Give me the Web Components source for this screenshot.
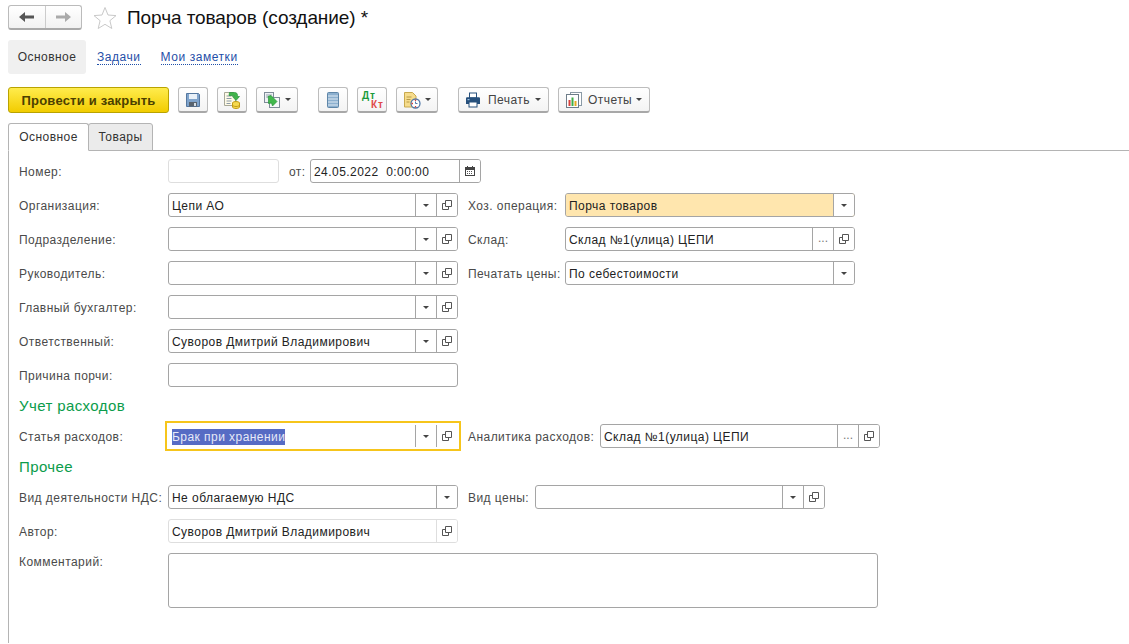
<!DOCTYPE html>
<html lang="ru">
<head>
<meta charset="utf-8">
<title>Порча товаров</title>
<style>
  html, body { margin: 0; background: #fff; }
  body { font: 12px "Liberation Sans", Arial, sans-serif; color: #333; }
  svg { display: block; }
</style>
</head>
<body>
<doc-page>
  <doc-header slot="header" title-text="Порча товаров (создание) *"></doc-header>
  <section-nav slot="nav"></section-nav>
  <tool-bar slot="tools">
    <tool-button primary>Провести и закрыть</tool-button>
    <tool-button>
      <svg slot="icon" width="14" height="14" viewBox="0 0 14 14"><path d="M.5.5h12l1 1v12H.5z" fill="#7fa3cb" stroke="#54779f"/><rect x="3" y="1" width="8" height="5" fill="#e8f0f8"/><rect x="3" y="9" width="8" height="4.500" fill="#59636e"/><rect x="8" y="10" width="2" height="3" fill="#d5dde5"/></svg>
    </tool-button>
    <tool-button>
      <svg slot="icon" width="18" height="18" viewBox="0 0 18 18"><path d="M1.500 1.500h9l2 2v11h-11z" fill="#fffbe8" stroke="#a8a898"/><path d="M3.500 5h5M3.500 7.500h5M3.500 10h5M3.500 12.500h4" stroke="#8c9aa8"/><ellipse cx="13" cy="12" rx="3.500" ry="1.500" fill="#f5d94e" stroke="#c29b16"/><path d="M9.500 12v4c0 .8 1.600 1.500 3.500 1.500s3.500-.7 3.500-1.500v-4" fill="#f5d94e" stroke="#c29b16"/><path d="M9.500 14c0 .8 1.600 1.500 3.500 1.500s3.500-.7 3.500-1.500" fill="none" stroke="#c29b16"/><path d="M6.500 1.500h5c2 0 3 1 3 3v1h2l-3.500 4-3.500-4h2v-1h-5.500z" fill="#3fb54a" stroke="#26903a" stroke-width=".7"/></svg>
    </tool-button>
    <tool-button menu>
      <svg slot="icon" width="18" height="18" viewBox="0 0 18 18"><rect x="1.500" y="1.500" width="9" height="10" fill="#eef1f4" stroke="#7f8c99"/><rect x="6.500" y="6.500" width="10" height="10" fill="#f7f8fa" stroke="#7f8c99"/><path d="M3 4h6M3 6h4" stroke="#9aa7b3"/><path d="M5 5.500l3-1 6 6-4.500 4.500-1-3-3 .5v-4.500z" fill="#41b84c" stroke="#26903a" stroke-width=".7"/></svg>
    </tool-button>
    <span class="sep" style="width:2px"></span>
    <tool-button>
      <svg slot="icon" width="12" height="16" viewBox="0 0 12 16"><rect x=".5" y=".5" width="11" height="15" rx="1" fill="#8db0cf" stroke="#5f86a8"/><path d="M1 4h10M1 7h10M1 10h10M1 13h10" stroke="#dfeaf4" stroke-width="1.200"/></svg>
    </tool-button>
    <tool-button dtkt></tool-button>
    <tool-button menu>
      <svg slot="icon" width="18" height="18" viewBox="0 0 18 18"><path d="M1.500 1.500h8l3.500 3.500v11h-11.500z" fill="#f6dc8c" stroke="#c8a94e"/><path d="M3.500 6h5M3.500 8.500h4M3.500 11h3" stroke="#b89a45"/><circle cx="12.500" cy="12.500" r="4.500" fill="#fff" stroke="#5279a8" stroke-width="1.300"/><path d="M12.500 8.500v1.500M8.500 12.500h1.500M12.500 16.500v-1.500" stroke="#d8403a" stroke-width="1.300"/><path d="M12.500 10.500v2h2" stroke="#5279a8" fill="none"/></svg>
    </tool-button>
    <span class="sep" style="width:2px"></span>
    <tool-button menu label style="--txt-gap:7px">
      <svg slot="icon" width="16" height="16" viewBox="0 0 16 16"><rect x="4.500" y="1" width="7" height="5" fill="#fff" stroke="#26507c"/><path d="M1 6.500c0-.8.500-1.300 1.300-1.300h11.400c.8 0 1.300.5 1.300 1.300v5.500h-14z" fill="#26507c"/><rect x="4" y="10" width="8" height="5" fill="#fff" stroke="#26507c"/><rect x="2.500" y="7" width="2" height="1.200" fill="#9cc0e2"/></svg>
      Печать
    </tool-button>
    <tool-button menu label style="--txt-gap:5px;width:92px">
      <svg slot="icon" width="18" height="18" viewBox="0 0 18 18"><rect x="5.500" y="1.500" width="11" height="13" fill="#fff" stroke="#8b9aa6"/><rect x="1.500" y="3.500" width="12" height="13" fill="#fff" stroke="#6e7d89"/><rect x="3.500" y="9" width="2" height="6" fill="#d8403a"/><rect x="6.500" y="6.500" width="2" height="8.500" fill="#3fae48"/><rect x="9.500" y="10" width="2" height="5" fill="#e6a91f"/></svg>
      Отчеты
    </tool-button>
  </tool-bar>
  <tab-strip slot="tabs"></tab-strip>
  <form-panel slot="panel">
    <form-row>
      <field-label width="149">Номер:</field-label>
      <form-field width="111" quiet></form-field>
      <field-label pad="10" width="21">от:</field-label>
      <form-field width="171" buttons="calendar" value="24.05.2022  0:00:00"></form-field>
    </form-row>
    <form-row>
      <field-label width="149">Организация:</field-label>
      <form-field width="290" buttons="drop open" value="Цепи АО"></form-field>
      <field-label pad="10" width="97">Хоз. операция:</field-label>
      <form-field width="290" buttons="drop" value="Порча товаров" tint></form-field>
    </form-row>
    <form-row>
      <field-label width="149">Подразделение:</field-label>
      <form-field width="290" buttons="drop open"></form-field>
      <field-label pad="10" width="97">Склад:</field-label>
      <form-field width="290" buttons="more open" value="Склад №1(улица) ЦЕПИ"></form-field>
    </form-row>
    <form-row>
      <field-label width="149">Руководитель:</field-label>
      <form-field width="290" buttons="drop open"></form-field>
      <field-label pad="10" width="97">Печатать цены:</field-label>
      <form-field width="290" buttons="drop" value="По себестоимости"></form-field>
    </form-row>
    <form-row>
      <field-label width="149">Главный бухгалтер:</field-label>
      <form-field width="290" buttons="drop open"></form-field>
    </form-row>
    <form-row>
      <field-label width="149">Ответственный:</field-label>
      <form-field width="290" buttons="drop open" value="Суворов Дмитрий Владимирович"></form-field>
    </form-row>
    <form-row>
      <field-label width="149">Причина порчи:</field-label>
      <form-field width="290"></form-field>
    </form-row>
    <section-title>Учет расходов</section-title>
    <form-row>
      <field-label width="149">Статья расходов:</field-label>
      <form-field width="290" buttons="drop open" value="Брак при хранении" focused></form-field>
      <field-label pad="10" width="132">Аналитика расходов:</field-label>
      <form-field width="280" buttons="more open" value="Склад №1(улица) ЦЕПИ"></form-field>
    </form-row>
    <section-title>Прочее</section-title>
    <form-row>
      <field-label width="149">Вид деятельности НДС:</field-label>
      <form-field width="290" buttons="drop" value="Не облагаемую НДС"></form-field>
      <field-label pad="10" width="67">Вид цены:</field-label>
      <form-field width="290" buttons="drop open"></form-field>
    </form-row>
    <form-row>
      <field-label width="149">Автор:</field-label>
      <form-field width="290" buttons="open" value="Суворов Дмитрий Владимирович" quiet></form-field>
    </form-row>
    <form-row>
      <field-label width="149" top>Комментарий:</field-label>
      <form-field width="710" height="55"></form-field>
    </form-row>
  </form-panel>
</doc-page>

<script>
function shadow(el, html) {
  el.attachShadow({ mode: "open" });
  el.shadowRoot.innerHTML = html;
}

class DocPage extends HTMLElement {
  constructor() {
    super();
    shadow(this, `
      <style>
        :host { display: flex; flex-direction: column; height: 644px; overflow: hidden; background: #fff; }
        .nav { padding: 6px 8px 0; }
        .tools { padding: 13px 8px 0; }
        .tabs { padding: 10px 0 0 8px; }
        .panel { flex: 1; margin-left: 8px; }
      </style>
      <slot name="header"></slot>
      <div class="nav"><slot name="nav"></slot></div>
      <div class="tools"><slot name="tools"></slot></div>
      <div class="tabs"><slot name="tabs"></slot></div>
      <div class="panel"><slot name="panel"></slot></div>
    `);
  }
}

class DocHeader extends HTMLElement {
  constructor() {
    super();
    shadow(this, `
      <style>
        :host { display: flex; align-items: center; height: 34px; padding: 0 8px; box-sizing: border-box; }
        .hist { display: flex; width: 74px; height: 25px; box-sizing: border-box; border: 1px solid #bbb; border-bottom: 2px solid #a9a9a9; border-radius: 3px; background: linear-gradient(#fff, #f2f2f2); }
        .hist div { flex: 1; display: flex; align-items: center; justify-content: center; }
        .hist div + div { border-left: 1px solid #ccc; }
        .star { margin-left: 11px; }
        h1 { margin: 1px 0 0 10px; font: 400 19px "Liberation Sans", Arial, sans-serif; letter-spacing: -.08px; color: #111; }
      </style>
      <div class="hist">
        <div><svg width="15" height="10" viewBox="0 0 15 10"><path d="M0 5l6-5v3.500h9v3H6V10z" fill="#555"/></svg></div>
        <div><svg width="15" height="10" viewBox="0 0 15 10"><path d="M15 5L9 0v3.500H0v3h9V10z" fill="#aaa"/></svg></div>
      </div>
      <svg class="star" width="24" height="23" viewBox="0 0 24 23"><path d="M12 1.500l3 7.500 8 .6-6.100 5.100 1.900 7.800L12 18.300l-6.800 4.200 1.900-7.800L1 9.600 9 9z" fill="#fff" stroke="#c9c9c9"/></svg>
      <h1></h1>
    `);
    this.shadowRoot.querySelector("h1").textContent = this.getAttribute("title-text");
  }
}

class SectionNav extends HTMLElement {
  constructor() {
    super();
    shadow(this, `
      <style>
        :host { display: flex; align-items: center; height: 34px; color: #333; letter-spacing: .45px; }
        .on { display: flex; align-items: center; height: 100%; width: 78px; justify-content: center; background: #f0f0f0; border-radius: 3px; }
        a { color: #1f4fa8; text-decoration: none; border-bottom: 1px dotted #1f4fa8; line-height: 14px; letter-spacing: .55px; }
        .a1 { margin-left: 11px; }
        .a2 { margin-left: 20px; }
      </style>
      <div class="on">Основное</div>
      <a class="a1">Задачи</a>
      <a class="a2">Мои заметки</a>
    `);
  }
}

class ToolBar extends HTMLElement {
  constructor() {
    super();
    shadow(this, `
      <style>
        :host { display: flex; gap: 9px; height: 26px; }
        ::slotted(.sep) { display: block; }
      </style>
      <slot></slot>
    `);
  }
}

class ToolButton extends HTMLElement {
  constructor() {
    super();
    const dtkt = this.hasAttribute("dtkt");
    shadow(this, `
      <style>
        :host { display: flex; flex: none; box-sizing: border-box; height: 26px; width: 30px; justify-content: center; align-items: center;
          border: 1px solid #bdbdbd; border-bottom: 2px solid #a8a8a8; border-radius: 3px; background: linear-gradient(#fff, #f3f3f3); color: #444; letter-spacing: .45px; }
        :host([primary]) { width: 161px; border: 1px solid #b9a300; background: linear-gradient(#ffec4d, #f2cc00); color: #4b4000; font-weight: 700; font-size: 13px; letter-spacing: .2px; }
        :host([menu]) { width: 42px; justify-content: flex-start; padding: 0 6px; }
        :host([label]) { width: 91px; }
        ::slotted(svg) { flex: none; }
        .ar { flex: none; width: 0; height: 0; border: 3px solid transparent; border-top: 3px solid #444; border-bottom: 0; margin-left: 4px; }
        :host([label]) .ar { margin-left: auto; margin-right: 1px; }
        :host([label]) .txt { margin-left: var(--txt-gap, 6px); margin-top: 1px; }
        .dt { position: relative; width: 20px; height: 17px; font: 700 10px/9px "Liberation Sans", Arial, sans-serif; letter-spacing: 1px; }
        .dt b:first-child { position: absolute; left: 0; top: 0; color: #1a9b3c; }
        .dt b:last-child { position: absolute; right: -2px; top: 9px; color: #e04a4a; }
      </style>
      ${dtkt ? '<div class="dt"><b>Дт</b><b>Кт</b></div>' : '<slot name="icon"></slot>'}
      <span class="txt"><slot></slot></span>
      ${this.hasAttribute("menu") ? '<span class="ar"></span>' : ""}
    `);
    const txt = this.shadowRoot.querySelector(".txt");
    if (!this.hasAttribute("label") && !this.hasAttribute("primary")) txt.style.display = "none";
  }
}

class TabStrip extends HTMLElement {
  constructor() {
    super();
    shadow(this, `
      <style>
        :host { display: flex; height: 28px; box-sizing: border-box; letter-spacing: .45px; }
        div { display: flex; align-items: center; justify-content: center; box-sizing: border-box; height: 28px; border: 1px solid #b4b4b4; border-radius: 3px 3px 0 0; color: #333; }
        .on { width: 81px; background: #fff; border-bottom: 1px solid #fff; position: relative; z-index: 1; }
        .off { width: 65px; margin-left: -1px; background: #ebebeb; }
      </style>
      <div class="on">Основное</div>
      <div class="off">Товары</div>
    `);
  }
}

class FormPanel extends HTMLElement {
  constructor() {
    super();
    shadow(this, `
      <style>
        :host { display: flex; flex-direction: column; gap: 10px; height: 100%; box-sizing: border-box; margin-top: -1px; padding: 8px 0 0 10px; border-top: 1px solid #b4b4b4; border-left: 1px solid #b4b4b4; }
      </style>
      <slot></slot>
    `);
  }
}

class FormRow extends HTMLElement {
  constructor() {
    super();
    shadow(this, `
      <style>
        :host { display: flex; align-items: center; min-height: 24px; }
      </style>
      <slot></slot>
    `);
  }
}

class FieldLabel extends HTMLElement {
  constructor() {
    super();
    shadow(this, `
      <style>
        :host { display: block; flex: none; box-sizing: border-box; color: #4a4a4a; letter-spacing: .45px; white-space: nowrap; padding-top: 2px; }
        :host([top]) { align-self: flex-start; }
      </style>
      <slot></slot>
    `);
    if (this.hasAttribute("width")) this.style.width = this.getAttribute("width") + "px";
    if (this.hasAttribute("pad")) this.style.marginLeft = this.getAttribute("pad") + "px";
  }
}

class SectionTitle extends HTMLElement {
  constructor() {
    super();
    shadow(this, `
      <style>
        :host { display: block; height: 17px; line-height: 17px; font-size: 15px; letter-spacing: .4px; color: #0b9c4b; }
      </style>
      <slot></slot>
    `);
  }
}

const FIELD_ICONS = {
  drop: '<span class="tri"></span>',
  more: '<span class="dots">...</span>',
  open: '<svg width="10" height="10" viewBox="0 0 10 10"><path d="M3.500.5h6v6h-6z" fill="none" stroke="#555"/><path d="M3.500 3.500h-3v6h6v-3" fill="none" stroke="#555"/></svg>',
  calendar: '<svg width="10" height="10" viewBox="0 0 10 10"><path d="M0 1h10v9H0z" fill="#444"/><path d="M1 4h8v5H1z" fill="#fff"/><path d="M2 0h1v2H2zM7 0h1v2H7z" fill="#444"/><path d="M2 5h1v1H2zM4 5h1v1H4zM6 5h1v1H6zM2 7h1v1H2zM4 7h1v1H4zM6 7h1v1H6z" fill="#555"/></svg>'
};

class FormField extends HTMLElement {
  constructor() {
    super();
    const buttons = (this.getAttribute("buttons") || "").split(" ").filter(Boolean);
    const value = this.getAttribute("value") || "";
    shadow(this, `
      <style>
        :host { display: flex; flex: none; box-sizing: border-box; height: 24px; border: 1px solid #a5a5a5; border-radius: 3px; background: #fff; color: #222; letter-spacing: .45px; white-space: pre; }
        :host([quiet]) { border-color: #dedede; }
        :host([quiet]) .btn { border-left-color: #dedede; }
        :host([tint]), :host([tint]) .val { background: #ffe6ae; }
        :host([focused]) { border-color: transparent; border-radius: 0; outline: 2px solid #f6c51b; outline-offset: 1px; }
        .val { flex: 1; min-width: 0; padding: 1px 0 0 3px; line-height: 22px; border-radius: 2px 0 0 2px; }
        :host([focused]) .val span { background: #566bc4; color: #e6e9f7; display: inline-block; line-height: 16px; }
        .btn { flex: none; width: 20px; display: flex; align-items: center; justify-content: center; border-left: 1px solid #a5a5a5; background: #fff; border-radius: 0 2px 2px 0; }
        .tri { width: 0; height: 0; border: 3px solid transparent; border-top: 3px solid #444; border-bottom: 0; }
        .dots { color: #777; margin-top: -2px; letter-spacing: 0; }
      </style>
      <div class="val"><span></span></div>
      ${buttons.map(b => `<div class="btn">${FIELD_ICONS[b]}</div>`).join("")}
    `);
    this.shadowRoot.querySelector(".val span").textContent = value;
    if (!value) this.shadowRoot.querySelector(".val span").style.display = "none";
    this.style.width = this.getAttribute("width") + "px";
    if (this.hasAttribute("height")) this.style.height = this.getAttribute("height") + "px";
  }
}

customElements.define("doc-page", DocPage);
customElements.define("doc-header", DocHeader);
customElements.define("section-nav", SectionNav);
customElements.define("tool-bar", ToolBar);
customElements.define("tool-button", ToolButton);
customElements.define("tab-strip", TabStrip);
customElements.define("form-panel", FormPanel);
customElements.define("form-row", FormRow);
customElements.define("field-label", FieldLabel);
customElements.define("section-title", SectionTitle);
customElements.define("form-field", FormField);
</script>
</body>
</html>
